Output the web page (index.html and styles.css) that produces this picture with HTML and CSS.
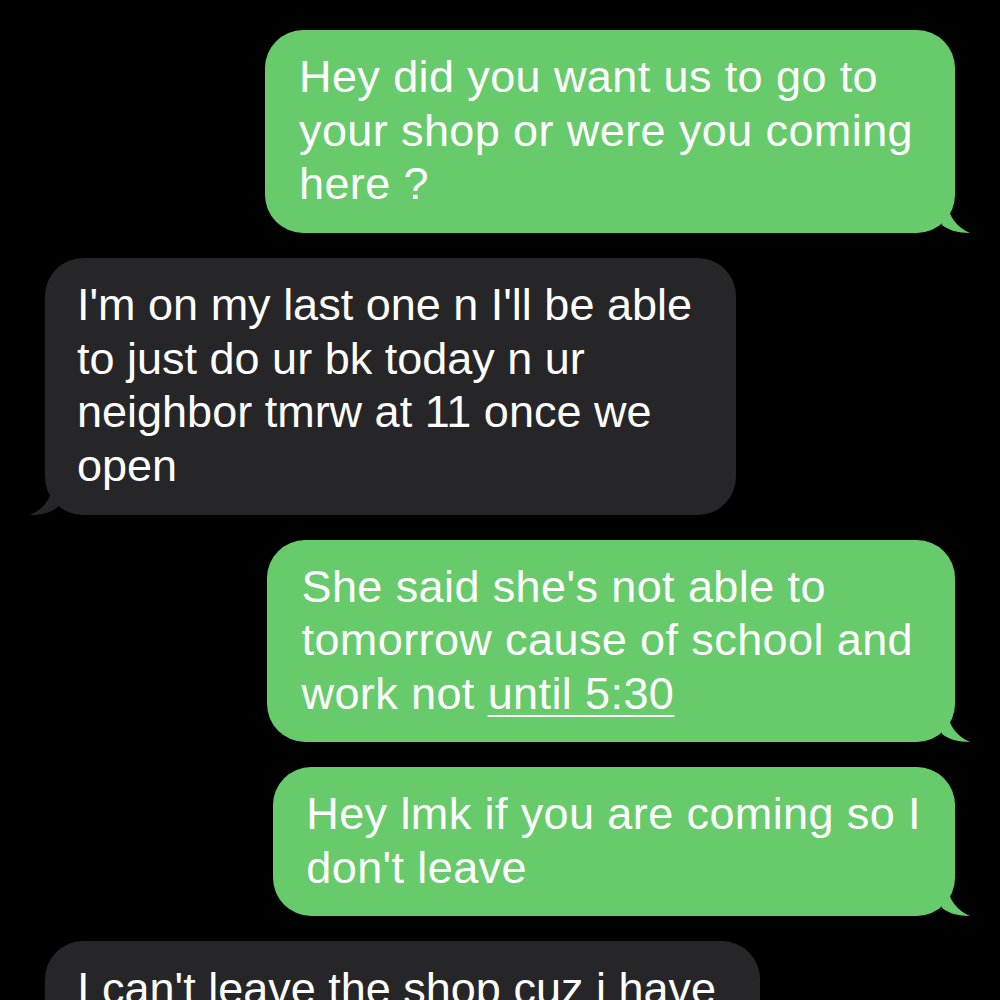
FILE: index.html
```html
<!DOCTYPE html>
<html lang="en">

<head>
  <title>Messages</title>
  <meta charset="UTF-8">
  <meta name="viewport" content="width=device-width, initial-scale=1">
  <link rel="stylesheet" href="styles.css">
</head>

<body>
  <div class="thread">
    <p class="stamp">Today 11:42 AM</p>

    <div class="msg sent">
      <p>Hey did you want us to go to<br>your shop or were you coming<br>here ?</p>
      <svg class="tail" viewBox="0 0 30 30"><path d="M0 0 L6 0 C6 12 14 24 28 30 C16 30 6 27 0 22 Z"/></svg>
    </div>

    <div class="msg recv">
      <p>I'm on my last one n I'll be able<br>to just do ur bk today n ur<br>neighbor tmrw at 11 once we<br>open</p>
      <svg class="tail" viewBox="0 0 30 30"><path d="M30 0 L24 0 C24 12 16 24 2 30 C14 30 24 27 30 22 Z"/></svg>
    </div>

    <div class="msg sent">
      <p>She said she's not able to<br>tomorrow cause of school and<br>work not <span class="link">until 5:30</span></p>
      <svg class="tail" viewBox="0 0 30 30"><path d="M0 0 L6 0 C6 12 14 24 28 30 C16 30 6 27 0 22 Z"/></svg>
    </div>

    <div class="msg sent short">
      <p>Hey lmk if you are coming so I<br>don't leave</p>
      <svg class="tail" viewBox="0 0 30 30"><path d="M0 0 L6 0 C6 12 14 24 28 30 C16 30 6 27 0 22 Z"/></svg>
    </div>

    <div class="msg recv">
      <p>I can't leave the shop cuz i have<br>customers</p>
    </div>
  </div>
</body>

</html>
```

FILE: styles.css
```css
* {
  box-sizing: border-box;
}

/* Whole screen */
body {
  margin: 0;
  background-color: #000;
  font-family: "Liberation Sans", Arial, sans-serif;
  overflow: hidden;
  height: 1000px;
}

.thread {
  display: flex;
  flex-direction: column;
  gap: 25px;
  padding: 0 45px;
}

/* timestamp cut off at the top */
.stamp {
  margin: -38px 0 0;
  text-align: center;
  color: #8e8e93;
  font-size: 30px;
  line-height: 43px;
}

/* Bubbles */
.msg {
  position: relative;
  border-radius: 38px;
  padding: 20px 42px 22px 34px;
  color: #fff;
}

.msg p {
  margin: 0;
  font-size: 45px;
  line-height: 53.5px;
  white-space: nowrap;
}

.sent {
  align-self: flex-end;
  background-color: #67cb6b;
}

.sent p {
  letter-spacing: 0.4px;
}

.sent.short {
  padding-left: 33px;
  padding-right: 34px;
}

.recv {
  align-self: flex-start;
  background-color: #262628;
  padding: 20.5px 44px 22.5px 32px;
}

.msg .tail {
  position: absolute;
  bottom: 0;
  width: 30px;
  height: 30px;
}

.sent .tail {
  right: -17px;
  fill: #67cb6b;
}

.recv .tail {
  left: -17px;
  fill: #262628;
}

.link {
  text-decoration: underline;
  text-decoration-thickness: 2px;
  text-underline-offset: 6px;
}
```
